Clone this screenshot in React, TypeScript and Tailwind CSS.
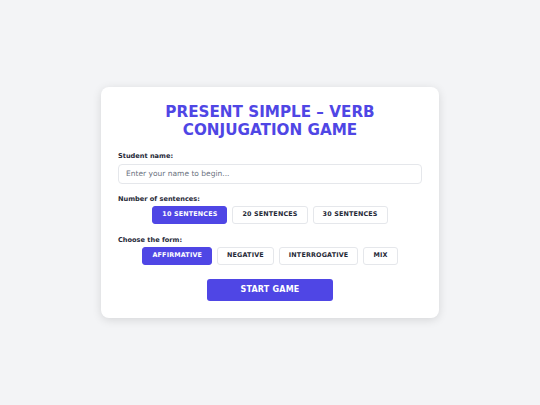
import React, { useState } from 'react';

const counts = ['10 SENTENCES', '20 SENTENCES', '30 SENTENCES'];
const forms = ['AFFIRMATIVE', 'NEGATIVE', 'INTERROGATIVE', 'MIX'];

function Choice({ label, active, onClick }: { label: string; active: boolean; onClick: () => void }) {
  return (
    <button
      onClick={onClick}
      className={`h-[18px] px-[9px] rounded-[3px] border text-[6.4px] font-bold tracking-wide ${
        active ? 'bg-[#4f46e5] border-[#4f46e5] text-white' : 'bg-white border-[#e5e7eb] text-[#1f2937]'
      }`}
    >
      {label}
    </button>
  );
}

export default function App() {
  const [count, setCount] = useState(0);
  const [form, setForm] = useState(0);

  return (
    <div
      className="w-[540px] h-[405px] bg-[#f3f4f6] flex items-center justify-center"
      style={{ fontFamily: '"DejaVu Sans", Verdana, sans-serif' }}
    >
      <div className="w-[338px] bg-white rounded-[8px] shadow-[0_2px_10px_rgba(0,0,0,0.12)] px-[17px] pt-[16px] pb-[17px]">
        <h1 className="text-center text-[#4f46e5] font-bold text-[15.2px] leading-[18px] mb-[13px]">
          PRESENT SIMPLE – VERB
          <br />
          CONJUGATION GAME
        </h1>

        <label className="block text-[6.6px] leading-[8px] font-bold text-[#1f2937] mb-[3.5px]">Student name:</label>
        <input
          className="block w-full h-[20px] border border-[#e5e7eb] rounded-[4px] px-[7px] text-[7.5px] text-[#374151] placeholder:text-[#6b7280] outline-none"
          placeholder="Enter your name to begin..."
        />

        <div className="mt-[11.5px] text-[6.6px] leading-[8px] font-bold text-[#1f2937] mb-[3px]">Number of sentences:</div>
        <div className="flex justify-center gap-[5px]">
          {counts.map((c, i) => (
            <Choice key={c} label={c} active={count === i} onClick={() => setCount(i)} />
          ))}
        </div>

        <div className="mt-[11.5px] text-[6.6px] leading-[8px] font-bold text-[#1f2937] mb-[3px]">Choose the form:</div>
        <div className="flex justify-center gap-[5px]">
          {forms.map((f, i) => (
            <Choice key={f} label={f} active={form === i} onClick={() => setForm(i)} />
          ))}
        </div>

        <div className="flex justify-center mt-[14.5px]">
          <button className="w-[126px] h-[22px] rounded-[3px] bg-[#4f46e5] text-white text-[8px] font-bold tracking-wide">
            START GAME
          </button>
        </div>
      </div>
    </div>
  );
}
